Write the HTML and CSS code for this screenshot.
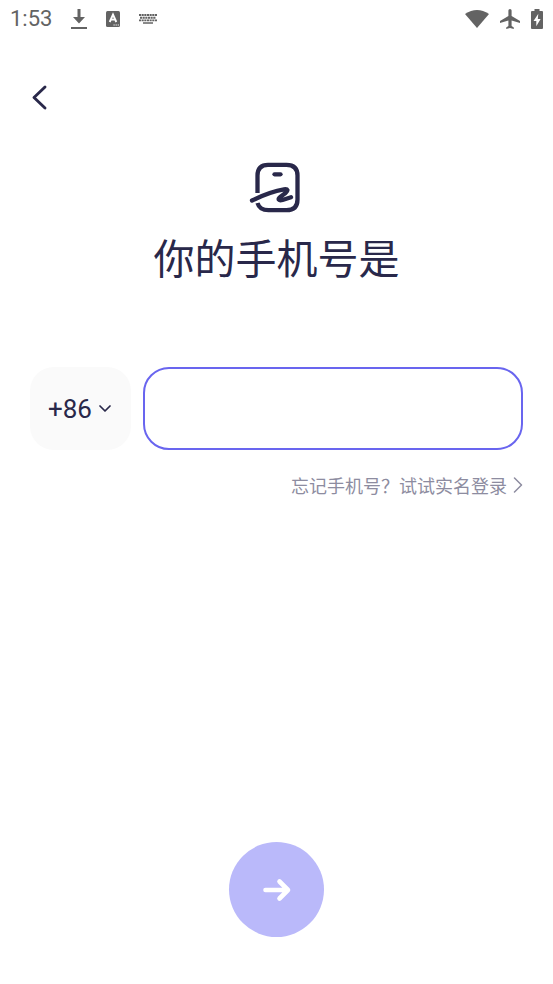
FILE: index.html
```html
<!DOCTYPE html>
<html lang="zh-CN">
<head>
<meta charset="utf-8">
<meta name="viewport" content="width=device-width, initial-scale=1">
<title>你的手机号是</title>
<link rel="stylesheet" href="styles.css">
</head>
<body>
<div class="app">
  <header class="status">
    <div class="status-left">
      <time class="clock">1:53</time>
      <svg width="16" height="20" viewBox="0 0 16 20" aria-hidden="true"><path fill="currentColor" d="M6.500 0h3v8H14l-6 6.500L2 8h4.500zM0 18h16v2H0z"/></svg>
      <svg width="14" height="16" viewBox="0 0 14 16" aria-hidden="true"><rect width="14" height="16" rx="1.500" fill="currentColor"/><path d="M3.700 11 7 3.500 10.300 11M5 8.600h4" fill="none" stroke="#fff" stroke-width="1.900"/><path d="M7.500 14h1.200M9.600 14h1.200M11.700 14h1.200" stroke="#fff" stroke-width="1.200"/></svg>
      <svg width="18" height="10" viewBox="0 0 18 10" aria-hidden="true"><g stroke="currentColor" stroke-width="1.900"><path d="M0 1h18M0 6.400h18" stroke-dasharray="2.100 .55"/><path d="M1 3.700h16" stroke-dasharray="2.100 .55"/><path d="M4 9h10" stroke-width="1.500"/></g></svg>
    </div>
    <div class="status-right">
      <svg width="24" height="18" viewBox="0 0 24 18" aria-hidden="true"><path fill="currentColor" d="M0 4Q12-4 24 4L12 18z"/></svg>
      <svg width="20" height="20" viewBox="0 0 20 20" aria-hidden="true"><path fill="currentColor" d="M20 14v-2l-8.400-5V1.500a1.600 1.500 0 0 0-3.200 0V7L0 12v2l8.400-2.500V17l-2.200 1.500V20l3.800-1 3.800 1v-1.500L11.600 17v-5.500z"/></svg>
      <svg width="12" height="20" viewBox="0 0 12 20" aria-hidden="true"><path fill="currentColor" d="M3.500 0h5v2H11q1 0 1 1v16q0 1-1 1H1q-1 0-1-1V3q0-1 1-1h2.500z"/><path fill="#fff" d="M7.300 4.800 2.500 12h2.800v5.300L9.600 10H6.800z"/></svg>
    </div>
  </header>

  <main class="content">
    <button class="back" type="button" aria-label="返回">
      <svg width="20" height="28" viewBox="0 0 20 28" aria-hidden="true"><path d="M15 4 4 14.500 15 25" fill="none" stroke="currentColor" stroke-width="2.900" stroke-linecap="round" stroke-linejoin="round"/></svg>
    </button>

    <div class="heading">
      <svg width="58" height="52" viewBox="0 0 58 52" fill="none" stroke="currentColor" stroke-width="4.300" aria-hidden="true">
        <path d="M9.500 31V13.500Q9.500 2.800 20 2.800h18.500q11 0 11 10.700v24q0 10.700-11 10.700H20.500Q11.500 48.200 9.500 41"/>
        <path d="M26.500 12.300h6" stroke-linecap="round"/>
        <path d="M4 38.500C15 33 26 29 36 27.300c4-.6 4.500 1.200 1.500 3.700l-5 3.700c-3.500 2.700-1.500 4.300 2 3.300l8.500-2.800" stroke-linecap="round" stroke-linejoin="round"/>
      </svg>
      <h1>你的手机号是</h1>
    </div>

    <form class="form" id="phone-form">
      <div class="fields">
        <div class="code">
          <select aria-label="国家或地区代码"><option>+86</option></select>
          <svg class="chevron" width="12" height="8" viewBox="0 0 12 8" aria-hidden="true"><path d="m1 1 5 5 5-5" fill="none" stroke="currentColor" stroke-width="1.700" stroke-linecap="round" stroke-linejoin="round"/></svg>
        </div>
        <input class="phone" type="tel" aria-label="手机号">
      </div>
      <a class="forgot" href="#">忘记手机号？试试实名登录
        <svg width="10" height="16" viewBox="0 0 10 16" aria-hidden="true"><path d="m1.500 1 7 7-7 7" fill="none" stroke="currentColor" stroke-width="1.500" stroke-linecap="round" stroke-linejoin="round"/></svg>
      </a>
    </form>

    <button class="next" type="submit" form="phone-form" aria-label="下一步">
      <svg width="30" height="24" viewBox="0 0 30 24" aria-hidden="true"><path d="M3.500 12h22M17.500 3.500l8.500 8.500-8.500 8.500" fill="none" stroke="currentColor" stroke-width="4.600" stroke-linecap="round" stroke-linejoin="round"/></svg>
    </button>
  </main>
</div>
</body>
</html>
```
FILE: styles.css
```css
* { box-sizing: border-box; }

body {
  margin: 0;
  background: #fff;
  color: #29284a;
  font-family: Roboto, "Noto Sans CJK SC", sans-serif;
}

svg { display: block; flex: none; }

.app {
  display: flex;
  flex-direction: column;
  min-height: 100vh;
}

.status {
  display: flex;
  justify-content: space-between;
  height: 37px;
  padding: 0 10px;
  color: #636363;
}

.status-left,
.status-right {
  display: flex;
  align-items: center;
}

.status-left { gap: 19px; }
.status-right { gap: 11px; }

.clock {
  font-size: 22px;
  line-height: 38px;
}

.content {
  flex: 1;
  display: flex;
  flex-direction: column;
  padding: 36px 30px 47px;
}

.back {
  display: flex;
  align-items: center;
  align-self: flex-start;
  width: 48px;
  height: 48px;
  padding: 0;
  border: 0;
  background: none;
  color: inherit;
}

.heading {
  display: flex;
  flex-direction: column;
  align-items: center;
  margin-top: 41px;
}

h1 {
  margin: 14px 0 0;
  font-family: "Noto Sans CJK SC", sans-serif;
  font-size: 41px;
  font-weight: 400;
  line-height: 56px;
}

.form {
  display: flex;
  flex-direction: column;
  margin-top: 83px;
}

.fields {
  display: flex;
  gap: 12px;
  height: 83px;
}

.code {
  position: relative;
  width: 101px;
}

.code select {
  width: 100%;
  height: 100%;
  padding: 0 18px;
  border: 0;
  border-radius: 24px;
  background: #fafafa;
  color: inherit;
  font: 26px Roboto, sans-serif;
  appearance: none;
}

.chevron {
  position: absolute;
  right: 20px;
  top: 38px;
  pointer-events: none;
}

.phone {
  flex: 1;
  min-width: 0;
  padding: 0 20px;
  border: 2px solid #6965ef;
  border-radius: 26px;
  outline: 0;
  background: #fff;
  color: inherit;
  font: 26px Roboto, sans-serif;
}

.forgot {
  display: flex;
  align-items: center;
  align-self: flex-end;
  gap: 6px;
  margin-top: 22px;
  color: #8d8ca0;
  font-family: "Noto Sans CJK SC", sans-serif;
  font-size: 18px;
  line-height: 26px;
  text-decoration: none;
}

.next {
  display: flex;
  align-items: center;
  justify-content: center;
  align-self: center;
  width: 95px;
  height: 95px;
  margin-top: auto;
  padding: 0;
  border: 0;
  border-radius: 50%;
  background: #bab9fa;
  color: #fff;
}
```
